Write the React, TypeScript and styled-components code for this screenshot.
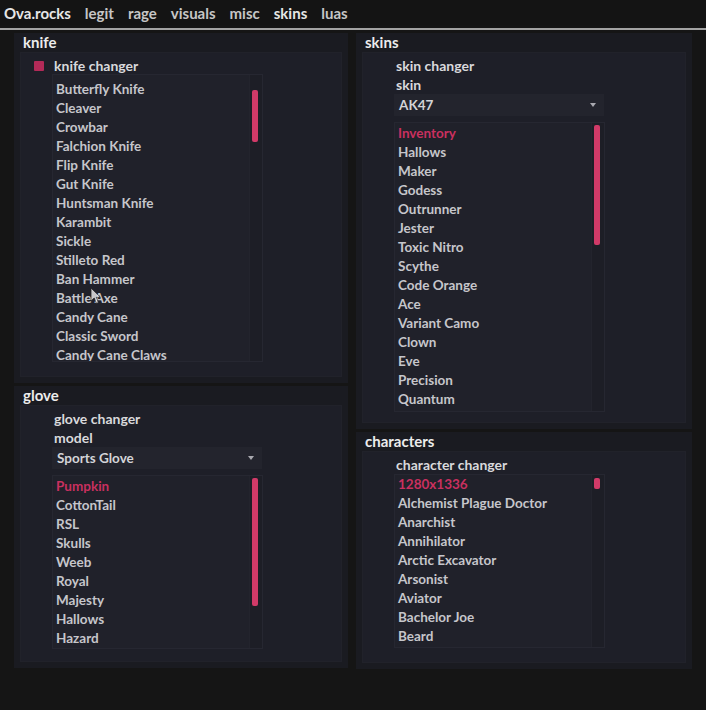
import React from "react";
import styled, { createGlobalStyle } from "styled-components";

const Global = createGlobalStyle`
  html, body { margin: 0; padding: 0; background: #151515; }
  body { font-family: "Lato", "Noto Sans", sans-serif; }
`;

const Page = styled.div`
  width: 706px;
  height: 710px;
  background: #151515;
  position: relative;
  overflow: hidden;
`;

const TopBar = styled.div`
  height: 25px;
  display: flex;
  align-items: center;
  gap: 14px;
  padding: 0 4px;
  font-size: 15px;
  font-weight: 700;
  color: #d2d2d2;
  background: #141414;
`;

const Tab = styled.span<{ $active?: boolean }>`
  color: ${(p) => (p.$active ? "#e6e6e6" : "#c6c6c6")};
`;

const Divider = styled.div`
  height: 2px;
  margin-top: 3px;
  background: #a3a3a3;
`;

const Columns = styled.div`
  display: grid;
  grid-template-columns: 334px 336px;
  column-gap: 8px;
  padding: 3px 14px 0 14px;
`;

const Column = styled.div`
  display: flex;
  flex-direction: column;
  gap: 3px;
`;

const Section = styled.div<{ $h: number }>`
  height: ${(p) => p.$h}px;
  background: #1a1b21;
  display: flex;
  flex-direction: column;
  box-sizing: border-box;
  padding: 0 6px 6px 6px;
`;

const Title = styled.div`
  height: 19px;
  line-height: 19px;
  padding-left: 3px;
  font-size: 15px;
  font-weight: 700;
  color: #ececec;
`;

const Inner = styled.div`
  flex: 1;
  background: #1e1f28;
  border: 1px solid #21222a;
  padding: 3px 0 0 31px;
  display: flex;
  flex-direction: column;
`;

const Label = styled.div<{ $checkbox?: boolean }>`
  height: 19px;
  display: flex;
  align-items: center;
  gap: 10px;
  margin-left: ${(p) => (p.$checkbox ? "-18px" : "0")};
  padding-left: ${(p) => (p.$checkbox ? "0" : "2px")};
  font-size: 14px;
  font-weight: 700;
  color: #d9d9dc;
`;

const Check = styled.span`
  width: 10px;
  height: 10px;
  background: #b22a58;
  border-radius: 1px;
`;

const Dropdown = styled.div`
  width: 210px;
  height: 22px;
  box-sizing: border-box;
  background: #23242d;
  display: flex;
  align-items: center;
  justify-content: space-between;
  padding: 0 8px 0 5px;
  font-size: 13.5px;
  font-weight: 700;
  color: #d4d4d8;
`;

const Caret = styled.span`
  width: 0;
  height: 0;
  border-left: 3px solid transparent;
  border-right: 3px solid transparent;
  border-top: 4px solid #a9a9b0;
`;

const ListBox = styled.div<{ $h: number; $mt: number }>`
  width: 211px;
  height: ${(p) => p.$h}px;
  margin-top: ${(p) => p.$mt}px;
  box-sizing: border-box;
  background: #20212a;
  border: 1px solid #262731;
  display: flex;
`;

const Items = styled.div<{ $offset: number }>`
  flex: 1;
  overflow: hidden;
  padding-left: 3px;
  & > :first-child {
    margin-top: ${(p) => p.$offset}px;
  }
`;

const Item = styled.div<{ $selected?: boolean }>`
  height: 19px;
  line-height: 19px;
  font-size: 13.5px;
  font-weight: 700;
  white-space: nowrap;
  color: ${(p) => (p.$selected ? "#c9305f" : "#c6c6cb")};
`;

const Track = styled.div`
  width: 12px;
  position: relative;
  background: #1d1e26;
  border-left: 1px solid #23242d;
`;

const Thumb = styled.div`
  position: absolute;
  left: 2px;
  width: 6px;
  border-radius: 2px;
  background: #d13a68;
`;

const Cursor = styled.svg`
  position: absolute;
  left: 90px;
  top: 287px;
  opacity: 0.8;
`;

type ListProps = {
  items: string[];
  h: number;
  mt: number;
  offset?: number;
  selected?: number;
  thumbTop: number;
  thumbH: number;
};

function List({ items, h, mt, offset = 0, selected = -1, thumbTop, thumbH }: ListProps) {
  return (
    <ListBox $h={h} $mt={mt}>
      <Items $offset={offset}>
        {items.map((t, i) => (
          <Item key={t + i} $selected={i === selected}>
            {t}
          </Item>
        ))}
      </Items>
      <Track>
        <Thumb style={{ top: thumbTop, height: thumbH }} />
      </Track>
    </ListBox>
  );
}

const knives = [
  "Bowie Knife",
  "Butterfly Knife",
  "Cleaver",
  "Crowbar",
  "Falchion Knife",
  "Flip Knife",
  "Gut Knife",
  "Huntsman Knife",
  "Karambit",
  "Sickle",
  "Stilleto Red",
  "Ban Hammer",
  "Battle Axe",
  "Candy Cane",
  "Classic Sword",
  "Candy Cane Claws",
  "Chainsaw",
];

const gloves = ["Pumpkin", "CottonTail", "RSL", "Skulls", "Weeb", "Royal", "Majesty", "Hallows", "Hazard"];

const skins = [
  "Inventory",
  "Hallows",
  "Maker",
  "Godess",
  "Outrunner",
  "Jester",
  "Toxic Nitro",
  "Scythe",
  "Code Orange",
  "Ace",
  "Variant Camo",
  "Clown",
  "Eve",
  "Precision",
  "Quantum",
];

const characters = [
  "1280x1336",
  "Alchemist Plague Doctor",
  "Anarchist",
  "Annihilator",
  "Arctic Excavator",
  "Arsonist",
  "Aviator",
  "Bachelor Joe",
  "Beard",
];

export default function App() {
  return (
    <Page>
      <Global />
      <TopBar>
        <Tab $active>Ova.rocks</Tab>
        <Tab>legit</Tab>
        <Tab>rage</Tab>
        <Tab>visuals</Tab>
        <Tab>misc</Tab>
        <Tab $active>skins</Tab>
        <Tab>luas</Tab>
      </TopBar>
      <Divider />
      <Columns>
        <Column>
          <Section $h={350}>
            <Title>knife</Title>
            <Inner>
              <Label $checkbox>
                <Check />
                knife changer
              </Label>
              <List items={knives} h={288} mt={-1} offset={-14} thumbTop={15} thumbH={52} />
            </Inner>
          </Section>
          <Section $h={282}>
            <Title>glove</Title>
            <Inner>
              <Label>glove changer</Label>
              <Label>model</Label>
              <Dropdown>
                Sports Glove
                <Caret />
              </Dropdown>
              <List items={gloves} h={174} mt={6} offset={1} selected={0} thumbTop={2} thumbH={128} />
            </Inner>
          </Section>
        </Column>
        <Column>
          <Section $h={396}>
            <Title>skins</Title>
            <Inner>
              <Label>skin changer</Label>
              <Label>skin</Label>
              <Dropdown>
                AK47
                <Caret />
              </Dropdown>
              <List items={skins} h={290} mt={6} offset={1} selected={0} thumbTop={2} thumbH={120} />
            </Inner>
          </Section>
          <Section $h={237}>
            <Title>characters</Title>
            <Inner>
              <Label>character changer</Label>
              <List items={characters} h={174} mt={0} offset={0} selected={0} thumbTop={3} thumbH={11} />
            </Inner>
          </Section>
        </Column>
      </Columns>
      <Cursor width="12" height="18" viewBox="0 0 12 18">
        <path d="M1 1 L1 14 L4.2 11 L6.5 16.5 L8.5 15.6 L6.3 10.3 L10.5 10.3 Z" fill="#f2f2f2" stroke="#222" strokeWidth="0.8" />
      </Cursor>
    </Page>
  );
}
